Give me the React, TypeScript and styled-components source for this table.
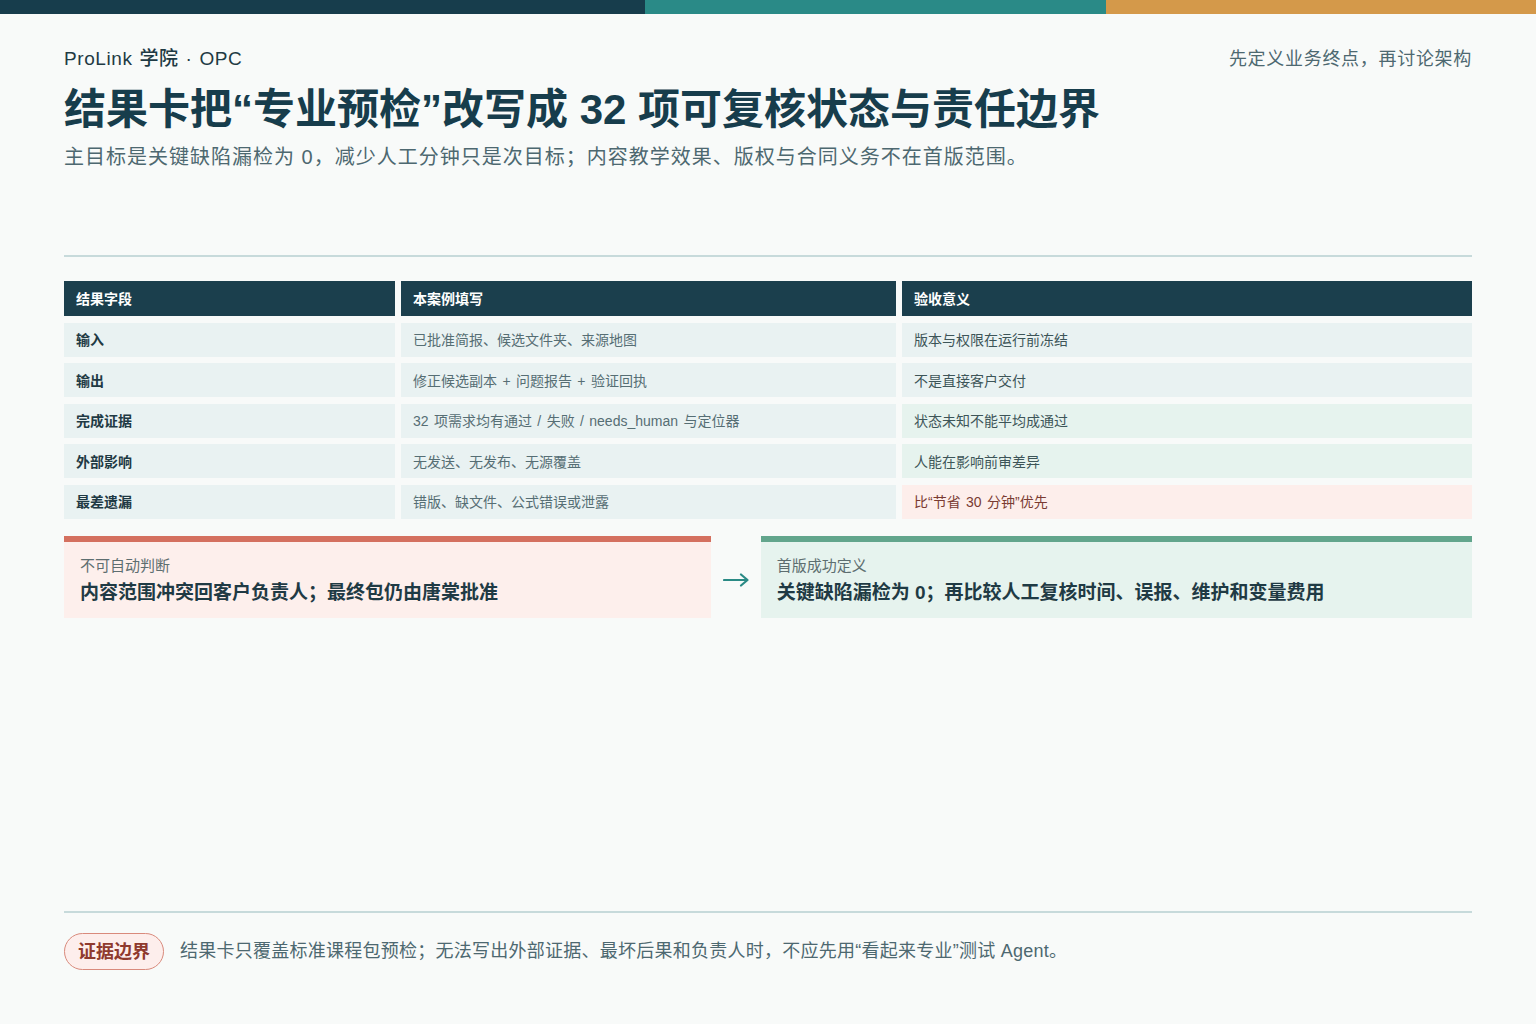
import React from "react";
import styled, { createGlobalStyle } from "styled-components";

const Global = createGlobalStyle`
  * { box-sizing: border-box; }
  html, body { margin: 0; padding: 0; background: #f8faf9; }
  body {
    font-family: "Liberation Sans", "Noto Sans CJK SC", sans-serif;
    color: #1f3a44;
  }
`;

const Page = styled.div`
  width: 1536px;
  height: 1024px;
  display: flex;
  flex-direction: column;
  background: #f8faf9;
  overflow: hidden;
`;

const TopBar = styled.div`
  display: grid;
  grid-template-columns: 42fr 30fr 28fr;
  height: 14px;
  flex: none;
`;

const BarSeg = styled.div<{ $c: string }>`
  background: ${(p) => p.$c};
`;

const Content = styled.div`
  flex: 1;
  display: flex;
  flex-direction: column;
  padding: 0 64px;
`;

const HeaderRow = styled.div`
  display: flex;
  justify-content: space-between;
  align-items: center;
  margin-top: 30px;
  height: 25px;
`;

const Brand = styled.div`
  font-size: 19px;
  font-weight: 500;
  color: #1f3a44;
  letter-spacing: 0.6px;
  word-spacing: 1px;
`;

const Tagline = styled.div`
  font-size: 18px;
  color: #4d6870;
  letter-spacing: 0.7px;
`;

const Title = styled.h1`
  margin: 16px 0 0;
  font-size: 42px;
  line-height: 50px;
  font-weight: 700;
  color: #173d4c;
`;

const Subtitle = styled.p`
  margin: 8px 0 0;
  font-size: 20px;
  line-height: 28px;
  color: #4d6870;
  letter-spacing: 1px;
`;

const Divider = styled.div`
  height: 2px;
  background: #c7dadb;
  margin-top: 84px;
  flex: none;
`;

const Table = styled.div`
  margin-top: 24px;
  display: grid;
  grid-template-columns: 331fr 495fr 570fr;
  column-gap: 6px;
  row-gap: 6.5px;
`;

const HeadCell = styled.div`
  height: 35px;
  background: #1b3f4d;
  color: #ffffff;
  font-size: 14px;
  font-weight: 700;
  display: flex;
  align-items: center;
  padding: 0 0 2px 12px;
`;

type Tone = "base" | "good" | "warn";

const toneBg: Record<Tone, string> = {
  base: "#e9f2f2",
  good: "#e6f3ee",
  warn: "#fdeeeb",
};

const Cell = styled.div<{ $tone?: Tone; $kind: "field" | "value" | "meaning" }>`
  height: 34px;
  background: ${(p) => toneBg[p.$tone || "base"]};
  display: flex;
  align-items: center;
  padding: 0 0 1px 12px;
  font-size: 14px;
  font-weight: ${(p) => (p.$kind === "field" ? 700 : 400)};
  color: ${(p) =>
    p.$kind === "field"
      ? "#1f3a44"
      : p.$tone === "warn"
      ? "#7a3b32"
      : p.$kind === "value"
      ? "#566e74"
      : "#3d5558"};
  word-spacing: 1.5px;
`;

const Cards = styled.div`
  margin-top: 17px;
  display: grid;
  grid-template-columns: 1fr 50px 1.1fr;
  align-items: stretch;
`;

const Card = styled.div<{ $accent: string; $bg: string }>`
  background: ${(p) => p.$bg};
  border-top: 6px solid ${(p) => p.$accent};
  padding: 13px 16px 12px;
  display: flex;
  flex-direction: column;
  gap: 3px;
`;

const CardLabel = styled.div`
  font-size: 15px;
  line-height: 21px;
  color: #5d6e70;
`;

const CardMain = styled.div`
  font-size: 19px;
  line-height: 27px;
  font-weight: 700;
  color: #1f3a44;
`;

const Arrow = styled.div`
  display: flex;
  align-items: center;
  justify-content: center;
  padding-top: 6px;
  color: #2a8a85;
`;

const Footer = styled.div`
  margin-top: auto;
  border-top: 2px solid #c7dadb;
  padding: 20px 0 54px;
  display: flex;
  align-items: center;
  gap: 16px;
`;

const Pill = styled.div`
  height: 37px;
  padding: 0 13px 3px;
  border-radius: 19px;
  border: 1.5px solid #d98a7c;
  background: #fdeeec;
  color: #8f3a2e;
  font-size: 18px;
  font-weight: 700;
  display: flex;
  align-items: center;
`;

const FooterText = styled.div`
  font-size: 18px;
  line-height: 24px;
  padding-bottom: 1px;
  color: #4d6870;
  letter-spacing: 0.25px;
`;

const rows: { field: string; value: string; meaning: string; tone: Tone }[] = [
  { field: "输入", value: "已批准简报、候选文件夹、来源地图", meaning: "版本与权限在运行前冻结", tone: "base" },
  { field: "输出", value: "修正候选副本 + 问题报告 + 验证回执", meaning: "不是直接客户交付", tone: "base" },
  { field: "完成证据", value: "32 项需求均有通过 / 失败 / needs_human 与定位器", meaning: "状态未知不能平均成通过", tone: "good" },
  { field: "外部影响", value: "无发送、无发布、无源覆盖", meaning: "人能在影响前审差异", tone: "good" },
  { field: "最差遗漏", value: "错版、缺文件、公式错误或泄露", meaning: "比“节省 30 分钟”优先", tone: "warn" },
];

export default function App() {
  return (
    <>
      <Global />
      <Page>
        <TopBar>
          <BarSeg $c="#173d4c" />
          <BarSeg $c="#2a8a87" />
          <BarSeg $c="#d4994a" />
        </TopBar>
        <Content>
          <HeaderRow>
            <Brand>ProLink 学院 · OPC</Brand>
            <Tagline>先定义业务终点，再讨论架构</Tagline>
          </HeaderRow>
          <Title>结果卡把“专业预检”改写成 32 项可复核状态与责任边界</Title>
          <Subtitle>
            主目标是关键缺陷漏检为 0，减少人工分钟只是次目标；内容教学效果、版权与合同义务不在首版范围。
          </Subtitle>
          <Divider />
          <Table>
            <HeadCell>结果字段</HeadCell>
            <HeadCell>本案例填写</HeadCell>
            <HeadCell>验收意义</HeadCell>
            {rows.map((r) => (
              <React.Fragment key={r.field}>
                <Cell $kind="field">{r.field}</Cell>
                <Cell $kind="value">{r.value}</Cell>
                <Cell $kind="meaning" $tone={r.tone}>
                  {r.meaning}
                </Cell>
              </React.Fragment>
            ))}
          </Table>
          <Cards>
            <Card $accent="#d4705f" $bg="#fdefec">
              <CardLabel>不可自动判断</CardLabel>
              <CardMain>内容范围冲突回客户负责人；最终包仍由唐棠批准</CardMain>
            </Card>
            <Arrow>
              <svg width="26" height="14" viewBox="0 0 26 14" fill="none">
                <path d="M1 7H24M18 1.5L24.5 7L18 12.5" stroke="currentColor" strokeWidth="2.2" strokeLinecap="round" strokeLinejoin="round" />
              </svg>
            </Arrow>
            <Card $accent="#62a58c" $bg="#e6f3ee">
              <CardLabel>首版成功定义</CardLabel>
              <CardMain>关键缺陷漏检为 0；再比较人工复核时间、误报、维护和变量费用</CardMain>
            </Card>
          </Cards>
          <Footer>
            <Pill>证据边界</Pill>
            <FooterText>
              结果卡只覆盖标准课程包预检；无法写出外部证据、最坏后果和负责人时，不应先用“看起来专业”测试 Agent。
            </FooterText>
          </Footer>
        </Content>
      </Page>
    </>
  );
}
